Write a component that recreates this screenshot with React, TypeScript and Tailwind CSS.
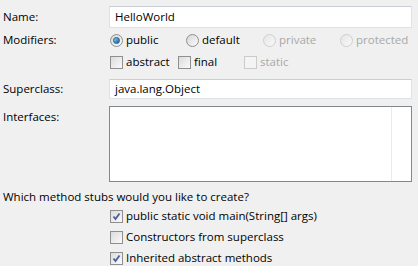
import React from "react";

const font = { fontFamily: '"Segoe UI", "Open Sans", "Liberation Sans", sans-serif' };

function Radio({ label, checked, disabled }: { label: string; checked?: boolean; disabled?: boolean }) {
  return (
    <label className="flex items-center gap-[3px]">
      <span
        className={
          "relative flex h-[13px] w-[13px] items-center justify-center rounded-full border " +
          (disabled
            ? "border-[#cfcfcf] bg-gradient-to-br from-[#e6e6e6] to-[#f8f8f8]"
            : "border-[#8e8f8f] bg-gradient-to-br from-[#d6d6d6] to-[#fbfbfb]")
        }
      >
        {checked && (
          <span className="h-[7px] w-[7px] rounded-full border border-[#1d5c8a] bg-gradient-to-br from-[#8fd0f4] to-[#0c5e9c]" />
        )}
      </span>
      <span className={disabled ? "text-[#a8a8a8]" : "text-black"}>{label}</span>
    </label>
  );
}

function Check({ label, checked, disabled }: { label: string; checked?: boolean; disabled?: boolean }) {
  return (
    <label className="flex items-center gap-[3px]">
      <span
        className={
          "flex h-[13px] w-[13px] items-center justify-center border " +
          (disabled
            ? "border-[#cbcbcb] bg-[#f4f4f4]"
            : "border-[#8f8f8f] bg-gradient-to-br from-[#dcdcdc] to-[#fafafa]")
        }
      >
        {checked && (
          <svg width="9" height="9" viewBox="0 0 9 9">
            <path d="M1.5 4.5 L3.5 7 L7.5 1.5" fill="none" stroke="#4a5f97" strokeWidth="1.8" />
          </svg>
        )}
      </span>
      <span className={disabled ? "text-[#a8a8a8]" : "text-black"}>{label}</span>
    </label>
  );
}

export default function App() {
  return (
    <div className="h-[266px] w-[418px] overflow-hidden bg-[#f0f0f0] text-[11.5px] leading-none text-black" style={font}>
      <div className="grid grid-cols-[109px_303px] pt-[6px]">
        {/* Name */}
        <div className="flex h-[22px] items-center pl-[3px]">Name:</div>
        <div className="flex h-[22px] items-center border border-[#dfe3e8] border-t-[#c9ced6] bg-white pl-[5px]">
          HelloWorld
        </div>

        {/* Modifiers */}
        <div className="flex h-[24px] items-center pl-[3px]">Modifiers:</div>
        <div className="grid h-[24px] grid-cols-[76px_77px_77px_1fr] items-center pl-[1px]">
          <Radio label="public" checked />
          <Radio label="default" />
          <Radio label="private" disabled />
          <Radio label="protected" disabled />
        </div>
        <div className="h-[20px]" />
        <div className="grid h-[20px] grid-cols-[68px_66px_1fr] items-center pl-[1px]">
          <Check label="abstract" />
          <Check label="final" />
          <Check label="static" disabled />
        </div>

        {/* Superclass */}
        <div className="mt-[7px] flex h-[20px] items-center pl-[3px]">Superclass:</div>
        <div className="mt-[7px] flex h-[20px] items-center border border-[#dfe3e8] border-t-[#c9ced6] bg-white pl-[5px]">
          java.lang.Object
        </div>

        {/* Interfaces */}
        <div className="mt-[7px] pl-[3px] pt-[5px]">Interfaces:</div>
        <div className="mt-[7px] flex h-[76px] border border-[#828790] bg-white">
          <div className="flex-1" />
          <div className="w-[1px] bg-[#e3ecfa]" />
          <div className="w-[19px]" />
        </div>
      </div>

      <div className="mt-[9px] pl-[3px]">Which method stubs would you like to create?</div>
      <div className="mt-[7px] flex flex-col gap-[8px] pl-[110px]">
        <Check label="public static void main(String[] args)" checked />
        <Check label="Constructors from superclass" />
        <Check label="Inherited abstract methods" checked />
      </div>
    </div>
  );
}
